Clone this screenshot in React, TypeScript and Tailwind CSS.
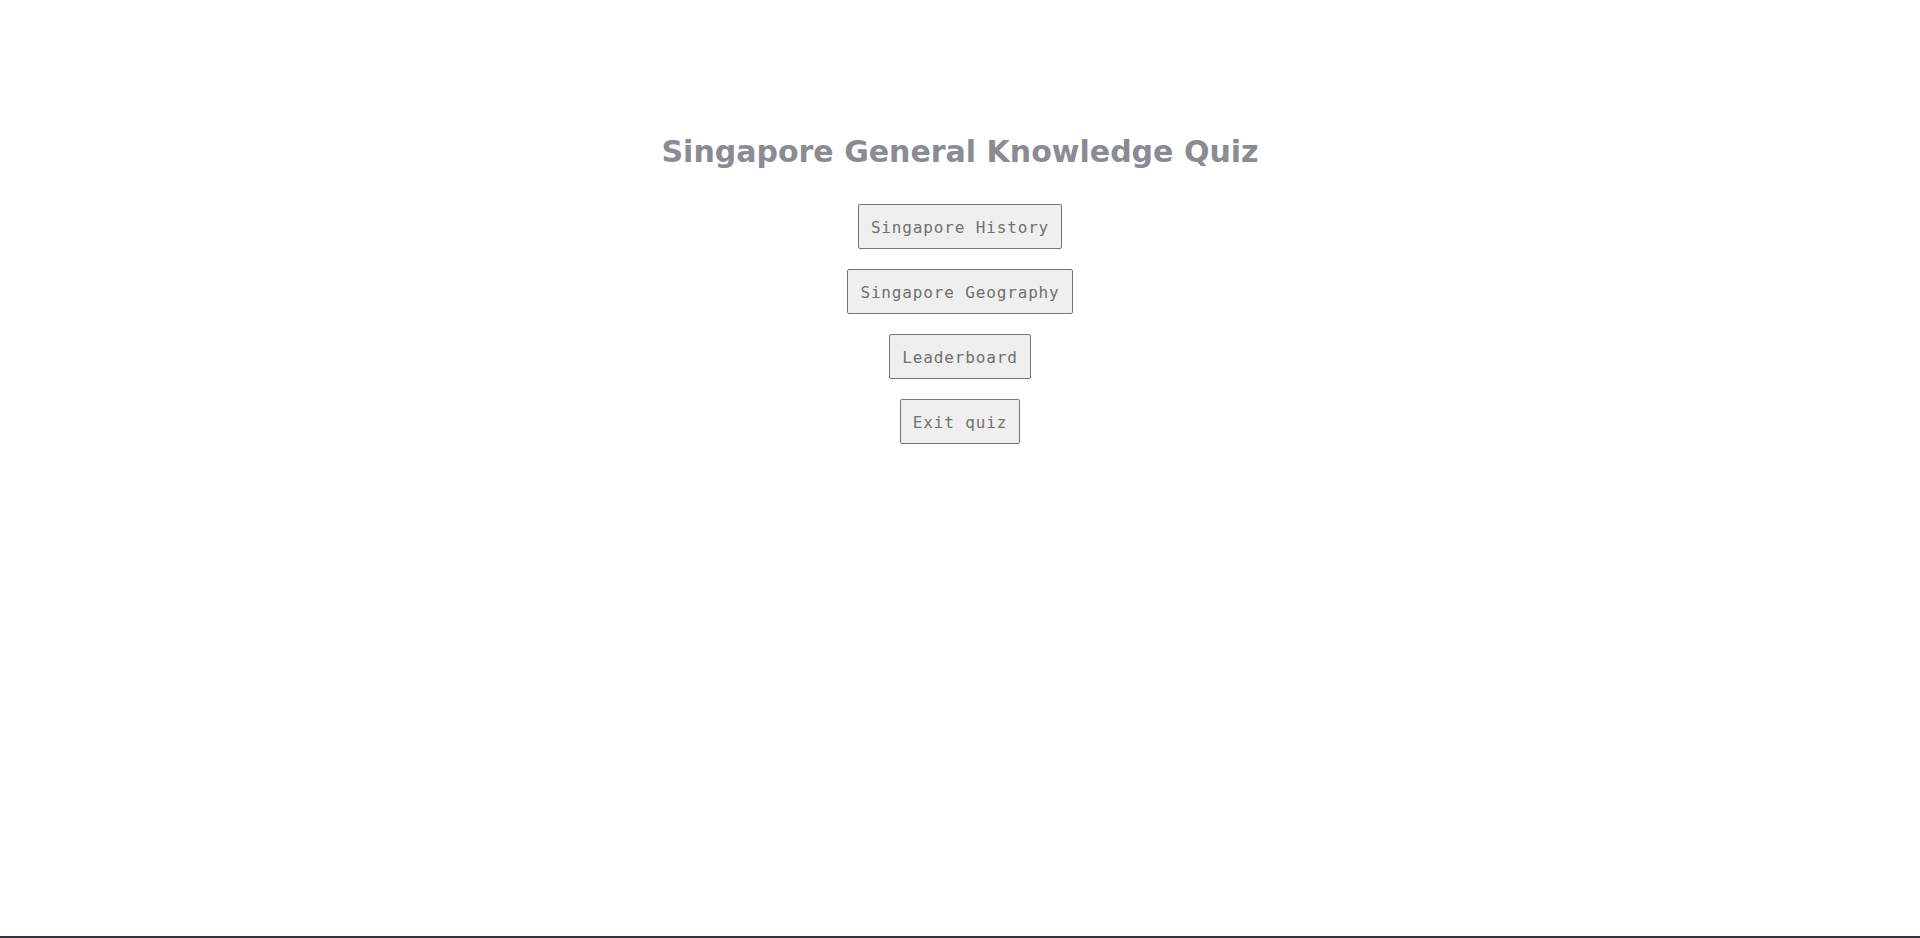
const buttons = ['Singapore History', 'Singapore Geography', 'Leaderboard', 'Exit quiz'];

const App = () => {
  return (
    <div className="h-screen flex flex-col bg-white">
      <main className="flex-1 flex flex-col items-center pt-[132px]">
        <h1 className="text-[30px] leading-[40px] font-bold text-[#8a8b93] font-['DejaVu_Sans','Noto_Sans',sans-serif]">
          Singapore General Knowledge Quiz
        </h1>

        {/* Menu */}
        <div className="mt-[32px] flex flex-col items-center gap-[20px]">
          {buttons.map((label) => (
            <button
              key={label}
              className="h-[45px] px-[12px] pt-[2px] bg-[#efefef] border border-[#767676] rounded-[2px] text-[16px] tracking-[0.85px] text-[#707070] font-['DejaVu_Sans_Mono','Liberation_Mono',monospace]"
            >
              {label}
            </button>
          ))}
        </div>
      </main>
      <div className="h-[2px] bg-[#2d3340]" />
    </div>
  );
};

export default App;
